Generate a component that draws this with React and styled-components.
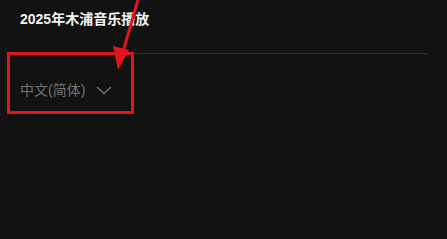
import styled, { createGlobalStyle } from 'styled-components';

const GlobalStyle = createGlobalStyle`
  html, body {
    margin: 0;
    background: #121212;
  }
  body {
    font-family: 'Liberation Sans', 'Noto Sans CJK SC', sans-serif;
  }
`;

export default function App() {
  return (
    <StyledPage>
      <GlobalStyle />
      <StyledTitle>2025年木浦音乐播放</StyledTitle>
      <StyledDivider />
      <StyledLangSelect>
        <span>中文(简体)</span>
        <svg width='16' height='14' viewBox='0 0 16 14' fill='none'>
          <path d='M1 4 L8 10.5 L15 4' stroke='#767676' strokeWidth='1.3' />
        </svg>
      </StyledLangSelect>

      {/* annotation overlay */}
      <StyledHighlight />
      <StyledArrow width='60' height='80' viewBox='0 0 60 80'>
        <line x1='47' y1='-4' x2='31' y2='52' stroke='#e3141c' strokeWidth='3' />
        <polygon points='26,70 21,46 37,50' fill='#e3141c' />
      </StyledArrow>
    </StyledPage>
  );
}

const StyledPage = styled.div`
  position: relative;
  width: 447px;
  height: 239px;
  padding: 9px 19px 0 20px;
  box-sizing: border-box;
  overflow: hidden;
`;

const StyledTitle = styled.div`
  font-size: 14px;
  font-weight: 700;
  line-height: 20px;
  color: #f2f2f2;
`;

const StyledDivider = styled.div`
  height: 1px;
  margin-top: 24px;
  background: #2e2e2e;
`;

const StyledLangSelect = styled.div`
  display: flex;
  align-items: center;
  gap: 11px;
  margin-top: 26px;
  font-size: 14px;
  line-height: 20px;
  color: #737373;

  & svg {
    margin-top: -1px;
  }
`;

const StyledHighlight = styled.div`
  position: absolute;
  left: 7px;
  top: 52px;
  width: 127px;
  height: 62px;
  box-sizing: border-box;
  border: 3px solid #e3141c;
`;

const StyledArrow = styled.svg`
  position: absolute;
  left: 92px;
  top: 0;
`;
